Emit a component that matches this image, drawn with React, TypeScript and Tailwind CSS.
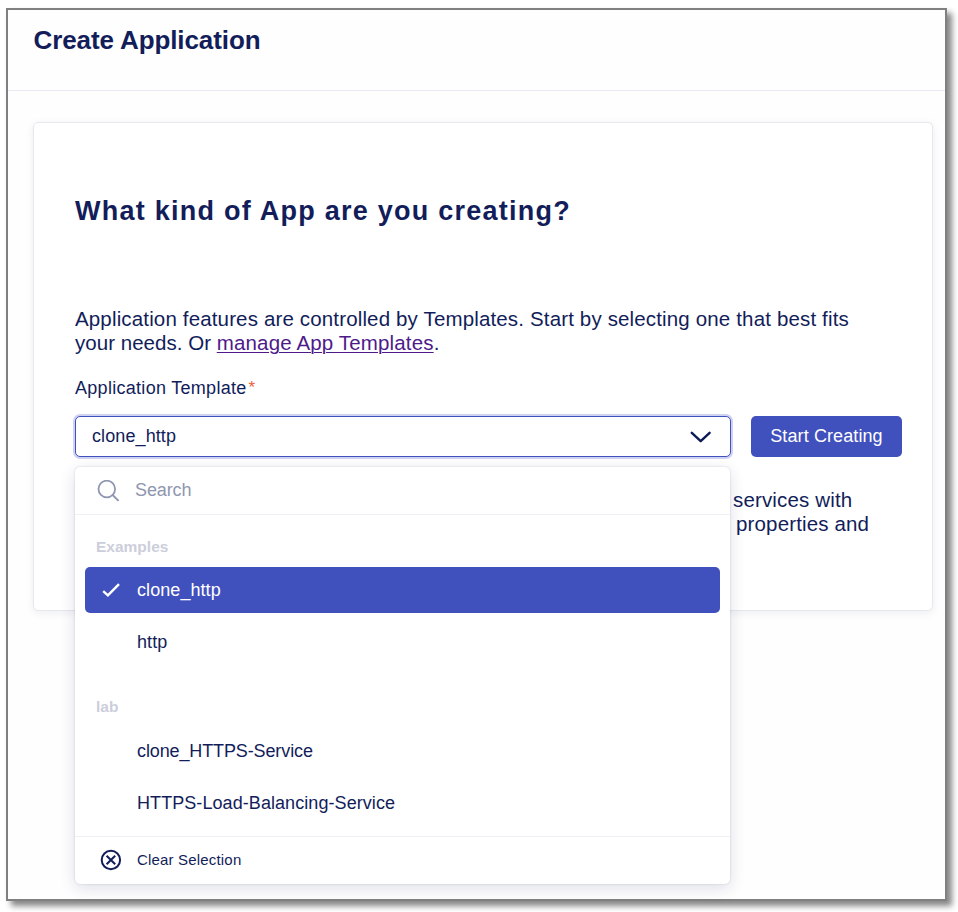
type OptionProps = { label: string; selected?: boolean; tight?: boolean };

function Option({ label, selected = false, tight = false }: OptionProps) {
  return (
    <li
      className={
        selected
          ? 'flex h-[46px] items-center rounded-[5px] bg-[#4050bd] pl-[17px] text-[18px] text-white'
          : 'flex h-[46px] items-center rounded-[5px] pl-[17px] text-[18px] text-[#121d5a]'
      }
    >
      <span className="flex w-[35px] items-center">
        {selected && (
          <svg width="19" height="16" viewBox="0 0 19 16" fill="none">
            <path d="M1.2 9.2 5.9 13.4 17 2.2" stroke="white" strokeWidth="2.4" />
          </svg>
        )}
      </span>
      <span className={tight ? 'tracking-[-0.12px]' : 'tracking-[0.07px]'}>{label}</span>
    </li>
  );
}

function TemplateMenu() {
  return (
    <div className="absolute top-[51px] left-0 z-10 h-[417px] w-[655px] rounded-[5px] bg-white shadow-[0_0_2px_rgba(20,30,90,0.2),0_4px_16px_rgba(20,30,90,0.14)]">
      <div className="flex h-[48px] items-center border-b border-[#eff0f3] pl-[22px] text-[18px] text-[#8f96b0]">
        <svg className="mr-[16px]" width="22" height="22" viewBox="0 0 22 22" fill="none" stroke="currentColor" strokeWidth="1.8">
          <circle cx="9.8" cy="9" r="8.3" />
          <path d="M15.6 15 21.5 20.8" />
        </svg>
        <span className="tracking-[-0.1px]">Search</span>
      </div>
      <div className="h-[321px] px-[10px]">
        <div className="h-[52px] pt-[22px] pl-[11px] text-[15.5px] leading-[20px] font-bold text-[#cccedb]">Examples</div>
        <ul className="flex flex-col gap-[6px]">
          <Option label="clone_http" selected />
          <Option label="http" />
        </ul>
        <div className="h-[63px] pt-[32px] pl-[11px] text-[15.5px] leading-[20px] font-bold text-[#cccedb]">lab</div>
        <ul className="flex flex-col gap-[6px]">
          <Option label="clone_HTTPS-Service" tight />
          <Option label="HTTPS-Load-Balancing-Service" />
        </ul>
      </div>
      <div className="flex h-[48px] items-center border-t border-[#eff0f3] pl-[25px] text-[15px] tracking-[0.18px]">
        <svg className="mr-[15px] mb-[2px]" width="22" height="22" viewBox="0 0 22 22" fill="none" stroke="currentColor" strokeWidth="2">
          <circle cx="10.9" cy="11" r="9.2" />
          <path d="m6.6 6.7 8.6 8.6M15.2 6.7l-8.6 8.6" />
        </svg>
        Clear Selection
      </div>
    </div>
  );
}

export default function App() {
  return (
    <div className="h-[912px] w-[958px] overflow-hidden bg-white pt-[8px] pl-[6px] font-['Liberation_Sans',Arial,sans-serif] text-[#121d5a]">
      <main className="h-[893px] w-[941px] border-2 border-[#808080] bg-[#fefefe] shadow-[5px_5px_6px_rgba(0,0,0,0.48)]">
        <header className="h-[81px] border-b border-[#e9eaf3] pt-[14px] pl-[25.5px]">
          <h1 className="text-[26px] leading-[32px] font-bold tracking-[-0.1px]">Create Application</h1>
        </header>
        <section className="mt-[31px] ml-[25px] h-[489px] w-[900px] rounded-[5px] border border-[#e6e8ee] bg-white pt-[71px] pl-[41px] shadow-[0_2px_8px_rgba(20,30,90,0.07)]">
          <h2 className="text-[27px] leading-[34px] font-bold tracking-[1.25px]">What kind of App are you creating?</h2>
          <p className="mt-[79px] text-[20.5px] leading-[24px] tracking-[0.15px] whitespace-nowrap">
            Application features are controlled by Templates. Start by selecting one that best fits
            <br />
            <span className="tracking-[0.03px]">your needs. Or </span>
            <a className="text-[#4e1a8a] underline decoration-1 underline-offset-2">manage App Templates</a>.
          </p>
          <label className="mt-[21px] flex h-[24px] items-center text-[18px] tracking-[0.29px]">
            Application Template<span className="ml-[2px] pb-[1px] text-[17px] text-[#f0603a]">*</span>
          </label>
          <div className="relative mt-[16px] flex gap-[20px]">
            <div className="flex h-[41px] w-[656px] items-center justify-between rounded-[5px] border border-[#4050bd] bg-white pr-[19px] pl-[16px] text-[18px] tracking-[0.1px] shadow-[0_0_0_2px_#cfd3f1]">
              clone_http
              <svg width="21" height="12" viewBox="0 0 21 12" fill="none">
                <path d="m1.8 1.8 8.9 8.4 8.9-8.4" stroke="#0e1a55" strokeWidth="2.4" strokeLinecap="round" strokeLinejoin="round" />
              </svg>
            </div>
            <button className="h-[41px] w-[151px] rounded-[5px] bg-[#4050bd] text-[18px] tracking-[0.1px] text-white">Start Creating</button>
            <TemplateMenu />
          </div>
          <div className="mt-[31px] flex flex-col text-[20.5px] leading-[24px] tracking-[0.15px]">
            <span className="pl-[658px]">services with</span>
            <span className="pl-[661px]">properties and</span>
          </div>
        </section>
      </main>
    </div>
  );
}
